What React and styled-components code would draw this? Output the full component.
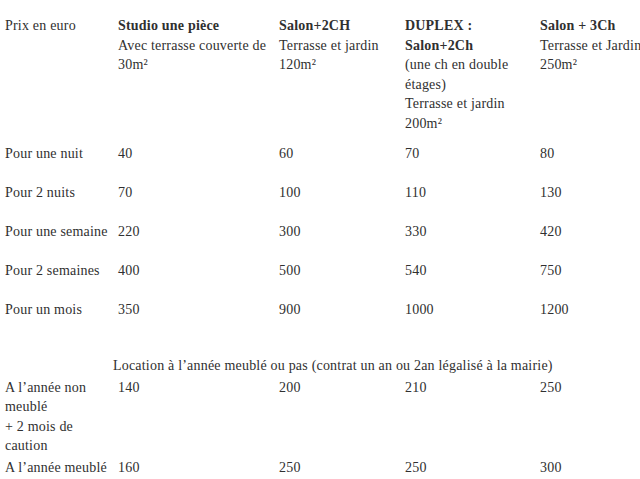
import React from "react";
import styled, { createGlobalStyle } from "styled-components";

const Global = createGlobalStyle`
  html, body { margin: 0; padding: 0; background: #ffffff; overflow: hidden; }
`;

const Sheet = styled.div`
  width: 640px;
  height: 479px;
  overflow: hidden;
  padding-top: 16px;
  box-sizing: border-box;
  font-family: "Liberation Serif", Tinos, "DejaVu Serif", serif;
  color: #303030;
`;

const Row = styled.div`
  display: grid;
  grid-template-columns: 113px 161px 126px 135px 140px;
  padding-left: 5px;
  padding-bottom: ${(p) => p.$after}px;
  font-size: 14px;
  letter-spacing: 0.2px;
  line-height: 19.6px;
`;

const Cell = styled.div`
  white-space: nowrap;
  padding-right: 4px;
`;

const Title = styled.div`
  font-weight: bold;
`;

const SpanCell = styled.div`
  grid-column: 2 / -1;
  margin-left: -5px;
  white-space: nowrap;
`;

const columns = [
  { title: ["Studio une pièce"], desc: ["Avec terrasse couverte de", "30m²"] },
  { title: ["Salon+2CH"], desc: ["Terrasse et jardin", "120m²"] },
  {
    title: ["DUPLEX :", "Salon+2Ch"],
    desc: ["(une ch en double", "étages)", "Terrasse et jardin", "200m²"],
  },
  { title: ["Salon + 3Ch"], desc: ["Terrasse et Jardin", "250m²"] },
];

const rates = [
  ["Pour une nuit", "40", "60", "70", "80"],
  ["Pour 2 nuits", "70", "100", "110", "130"],
  ["Pour une semaine", "220", "300", "330", "420"],
  ["Pour 2 semaines", "400", "500", "540", "750"],
  ["Pour un mois", "350", "900", "1000", "1200"],
];

const Lines = ({ items }) =>
  items.map((t, i) => (
    <React.Fragment key={i}>
      {i > 0 && <br />}
      {t}
    </React.Fragment>
  ));

export default function App() {
  return (
    <>
      <Global />
      <Sheet>
        <Row $after={10}>
          <Cell>Prix en euro</Cell>
          {columns.map((c, i) => (
            <Cell key={i}>
              <Title>
                <Lines items={c.title} />
              </Title>
              <Lines items={c.desc} />
            </Cell>
          ))}
        </Row>
        {rates.map((r, i) => (
          <Row key={r[0]} $after={i === rates.length - 1 ? 36.5 : 19.4}>
            {r.map((v) => (
              <Cell key={v}>{v}</Cell>
            ))}
          </Row>
        ))}
        <Row $after={2.4}>
          <SpanCell>
            Location à l’année meublé ou pas (contrat un an ou 2an légalisé à la mairie)
          </SpanCell>
        </Row>
        <Row $after={1.6}>
          <Cell>
            <Lines items={["A l’année non", "meublé", "+ 2 mois de", "caution"]} />
          </Cell>
          <Cell>140</Cell>
          <Cell>200</Cell>
          <Cell>210</Cell>
          <Cell>250</Cell>
        </Row>
        <Row $after={0}>
          <Cell>A l’année meublé</Cell>
          <Cell>160</Cell>
          <Cell>250</Cell>
          <Cell>250</Cell>
          <Cell>300</Cell>
        </Row>
      </Sheet>
    </>
  );
}
